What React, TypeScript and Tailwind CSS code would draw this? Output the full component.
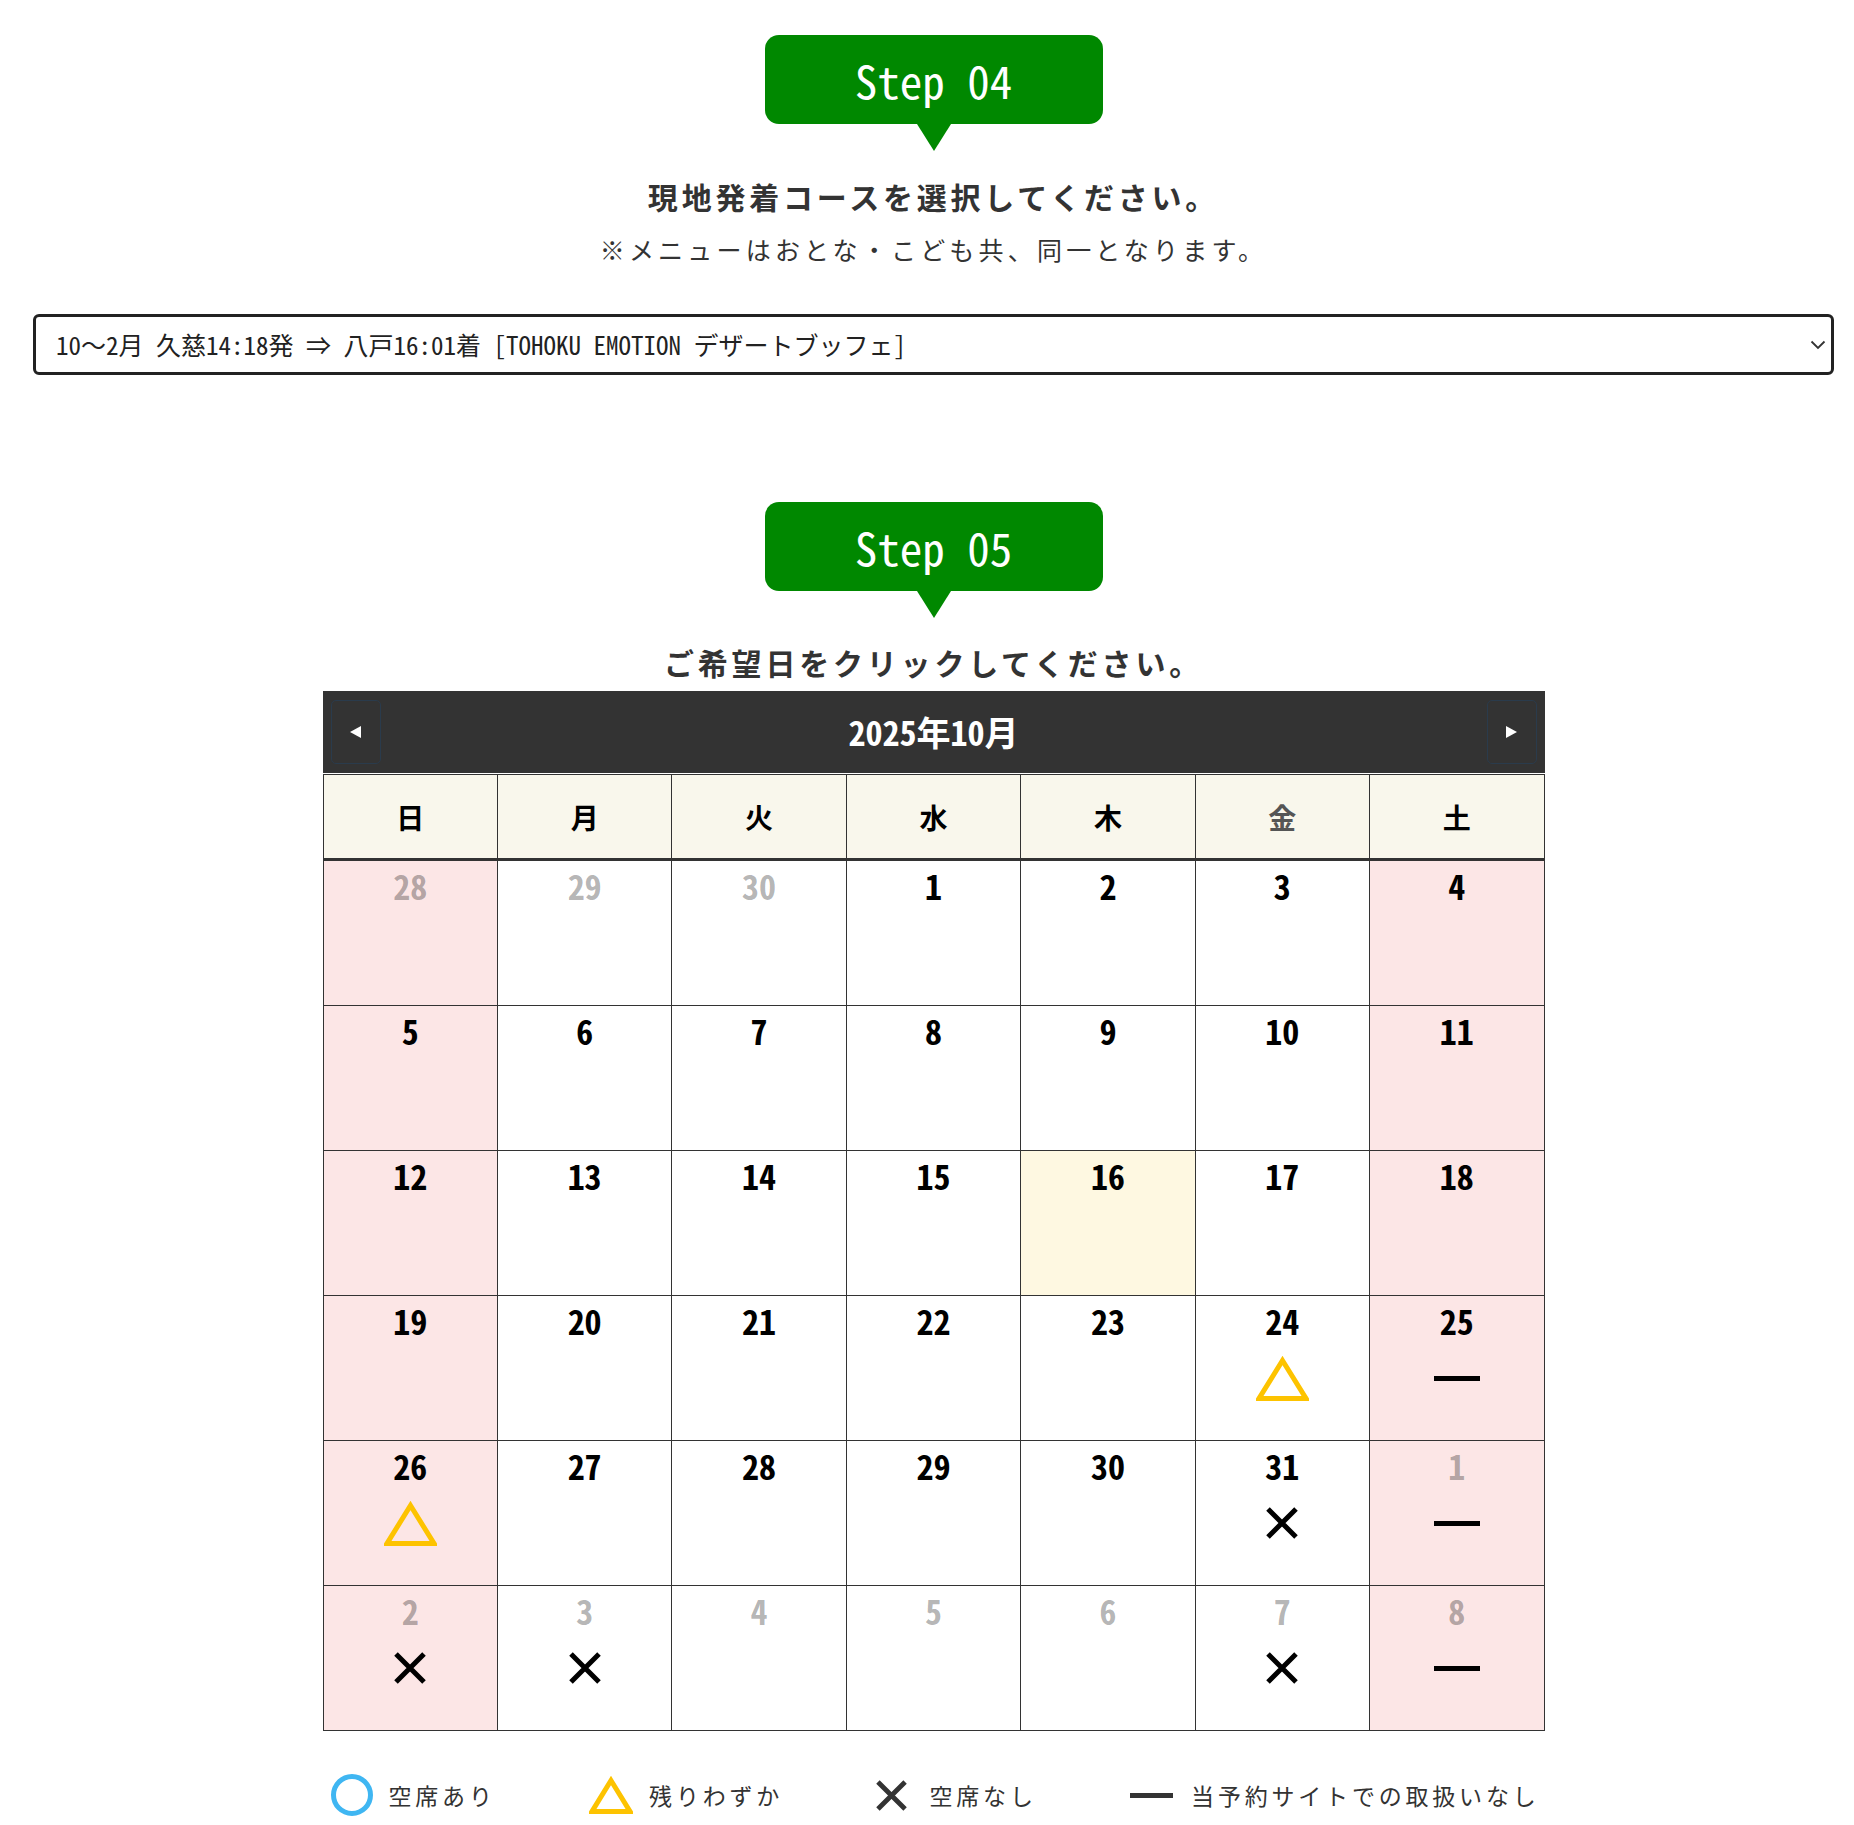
import React from "react";

type Mark = "tri" | "cross" | "dash" | null;
type Day = { d: number; out?: boolean; mark?: Mark; today?: boolean };

const WEEKDAYS = ["日", "月", "火", "水", "木", "金", "土"];

const WEEKS: Day[][] = [
  [{ d: 28, out: true }, { d: 29, out: true }, { d: 30, out: true }, { d: 1 }, { d: 2 }, { d: 3 }, { d: 4 }],
  [{ d: 5 }, { d: 6 }, { d: 7 }, { d: 8 }, { d: 9 }, { d: 10 }, { d: 11 }],
  [{ d: 12 }, { d: 13 }, { d: 14 }, { d: 15 }, { d: 16, today: true }, { d: 17 }, { d: 18 }],
  [{ d: 19 }, { d: 20 }, { d: 21 }, { d: 22 }, { d: 23 }, { d: 24, mark: "tri" }, { d: 25, mark: "dash" }],
  [{ d: 26, mark: "tri" }, { d: 27 }, { d: 28 }, { d: 29 }, { d: 30 }, { d: 31, mark: "cross" }, { d: 1, out: true, mark: "dash" }],
  [
    { d: 2, out: true, mark: "cross" },
    { d: 3, out: true, mark: "cross" },
    { d: 4, out: true },
    { d: 5, out: true },
    { d: 6, out: true },
    { d: 7, out: true, mark: "cross" },
    { d: 8, out: true, mark: "dash" },
  ],
];

function StepBadge({ label }: { label: string }) {
  return (
    <div className="flex flex-col items-center">
      <div className="flex h-[89px] w-[338px] items-center justify-center rounded-[14px] bg-[#008800] font-['Noto_Sans_Mono_CJK_JP','Noto_Sans_CJK_JP','DejaVu_Sans_Mono',monospace] text-[45px] leading-none text-white">
        {label}
      </div>
      <div className="h-0 w-0 border-t-[27px] border-r-[17px] border-l-[17px] border-t-[#008800] border-r-transparent border-l-transparent" />
    </div>
  );
}

function Triangle({ w, h, stroke = "#fdc300" }: { w: number; h: number; stroke?: string }) {
  return (
    <svg width={w} height={h} viewBox={`0 0 ${w} ${h}`} fill="none">
      <polygon
        points={`${w / 2},4.5 ${w - 3},${h - 2.5} 3,${h - 2.5}`}
        stroke={stroke}
        strokeWidth={5}
        strokeLinejoin="miter"
      />
    </svg>
  );
}

function Cross({ size, color = "#000" }: { size: number; color?: string }) {
  return (
    <svg width={size} height={size} viewBox="0 0 32 32" fill="none">
      <path d="M2 2L30 30M30 2L2 30" stroke={color} strokeWidth={5} />
    </svg>
  );
}

function MarkIcon({ mark }: { mark: Mark }) {
  if (mark === "tri") return <Triangle w={53} h={45} />;
  if (mark === "cross") return <Cross size={32} />;
  if (mark === "dash") return <div className="h-[5px] w-[46px] bg-black" />;
  return null;
}

function Calendar() {
  return (
    <div className="mx-auto w-[1222px]">
      <div className="flex h-[82px] items-center justify-between bg-[#333] px-[8px]">
        <button className="flex h-[64px] w-[50px] items-center justify-center rounded-[5px] border border-[#2a3b4c]">
          <span className="h-0 w-0 border-t-[6px] border-r-[11px] border-b-[6px] border-t-transparent border-r-white border-b-transparent" />
        </button>
        <div className="font-['Noto_Sans_Mono_CJK_JP','Noto_Sans_CJK_JP','DejaVu_Sans_Mono',monospace] text-[34px] font-bold leading-none text-white">
          2025年10月
        </div>
        <button className="flex h-[64px] w-[50px] items-center justify-center rounded-[5px] border border-[#2a3b4c]">
          <span className="h-0 w-0 border-t-[6px] border-b-[6px] border-l-[11px] border-t-transparent border-b-transparent border-l-white" />
        </button>
      </div>

      <div className="mt-px grid grid-cols-7 border-l border-[#333]">
        {WEEKDAYS.map((w, i) => (
          <div
            key={w}
            className={
              "flex h-[87px] items-center justify-center border-t border-r border-b-[3px] border-[#333] bg-[#f9f7ec] text-[28px] font-bold " +
              (i === 5 ? "text-[#555]" : "text-black")
            }
          >
            {w}
          </div>
        ))}
      </div>

      <div className="grid grid-cols-7 border-l border-[#333]">
        {WEEKS.flat().map((day, i) => {
          const col = i % 7;
          const weekend = col === 0 || col === 6;
          const bg = day.today ? "bg-[#fef8e1]" : weekend ? "bg-[#fce6e6]" : "bg-white";
          return (
            <div key={i} className={"flex h-[145px] flex-col items-center border-r border-b border-[#333] " + bg}>
              <div
                className={
                  "pt-[8px] font-['Noto_Sans_Mono_CJK_JP','Noto_Sans_CJK_JP','DejaVu_Sans_Mono',monospace] text-[34px] font-bold leading-none " +
                  (day.out ? "text-black/30" : "text-black")
                }
              >
                {day.d}
              </div>
              <div className="mt-[16px] flex h-[48px] items-center justify-center">
                <MarkIcon mark={day.mark ?? null} />
              </div>
            </div>
          );
        })}
      </div>
    </div>
  );
}

function Legend() {
  return (
    <div className="mx-auto mt-[43px] flex w-[1222px] items-center justify-between pr-[5px] pl-[8px] text-[23px] tracking-[3.8px] text-[#333]">
      <div className="flex items-center gap-4">
        <div className="h-[42px] w-[42px] rounded-full border-[5px] border-[#3fb6f2]" />
        <span>空席あり</span>
      </div>
      <div className="flex items-center gap-4">
        <Triangle w={44} h={38} />
        <span>残りわずか</span>
      </div>
      <div className="flex items-center gap-[22px]">
        <Cross size={31} color="#333" />
        <span>空席なし</span>
      </div>
      <div className="flex items-center gap-[18px]">
        <div className="h-[5px] w-[43px] bg-[#333]" />
        <span>当予約サイトでの取扱いなし</span>
      </div>
    </div>
  );
}

export default function App() {
  return (
    <div className="min-h-screen bg-white pt-[35px] pr-[20px] pb-[9px] pl-[33px] font-['Noto_Sans_CJK_JP','Noto_Sans',sans-serif] text-[#333]">
      <StepBadge label="Step 04" />
      <h2 className="mt-[24px] text-center text-[30px] leading-[42px] font-bold tracking-[3.8px]">
        現地発着コースを選択してください。
      </h2>
      <p className="mt-[14px] text-center text-[25px] leading-[36px] tracking-[4.2px]">
        ※メニューはおとな・こども共、同一となります。
      </p>

      <div className="relative mt-[47px]">
        <select className="h-[61px] w-full appearance-none rounded-[6px] border-[3px] border-[#222] bg-white pl-[20px] font-['Noto_Sans_Mono_CJK_JP','Noto_Sans_CJK_JP','DejaVu_Sans_Mono',monospace] text-[25px] text-[#222]">
          <option>10〜2月 久慈14:18発 ⇒ 八戸16:01着 [TOHOKU EMOTION デザートブッフェ]</option>
        </select>
        <svg
          className="pointer-events-none absolute top-[26px] right-[8px]"
          width="16"
          height="10"
          viewBox="0 0 16 10"
          fill="none"
        >
          <path d="M1.5 1.5L8 8L14.5 1.5" stroke="#333" strokeWidth="1.8" />
        </svg>
      </div>

      <div className="mt-[127px]">
        <StepBadge label="Step 05" />
      </div>
      <h2 className="mt-[23px] text-center text-[30px] leading-[42px] font-bold tracking-[3.8px]">
        ご希望日をクリックしてください。
      </h2>
      <div className="mt-[8px]">
        <Calendar />
      </div>
      <Legend />
    </div>
  );
}
